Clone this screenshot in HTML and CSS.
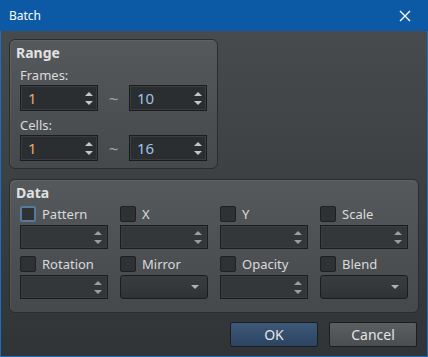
FILE: index.html
```html
<!DOCTYPE html>
<html>
    <head>
        <meta charset="UTF-8">
        <link rel="stylesheet" href="styles.css">
    </head>
    <body>
        <div class="window">
            <div class="titlebar">
                <span class="title">Batch</span>
                <svg class="close" width="12" height="12" viewBox="0 0 12 12"><path d="M1 1L11 11M11 1L1 11" stroke="#ffffff" stroke-width="1.4"/></svg>
            </div>
            <div class="content">
                <!-- 范围 -->
                <div class="group range">
                    <div class="group-title">Range</div>
                    <div class="label">Frames:</div>
                    <div class="range-row">
                        <div class="spin"><span class="val orange">1</span><span class="arrows"><i class="up"></i><i class="down"></i></span></div>
                        <div class="tilde">~</div>
                        <div class="spin"><span class="val blue">10</span><span class="arrows"><i class="up"></i><i class="down"></i></span></div>
                    </div>
                    <div class="label">Cells:</div>
                    <div class="range-row">
                        <div class="spin"><span class="val orange">1</span><span class="arrows"><i class="up"></i><i class="down"></i></span></div>
                        <div class="tilde">~</div>
                        <div class="spin"><span class="val blue">16</span><span class="arrows"><i class="up"></i><i class="down"></i></span></div>
                    </div>
                </div>
                <!-- 数据 -->
                <div class="group data">
                    <div class="group-title">Data</div>
                    <div class="data-grid">
                        <div class="item"><div class="check"><i class="box focus"></i>Pattern</div><div class="field spin"><span class="arrows"><i class="up"></i><i class="down"></i></span></div></div>
                        <div class="item"><div class="check"><i class="box"></i>X</div><div class="field spin"><span class="arrows"><i class="up"></i><i class="down"></i></span></div></div>
                        <div class="item"><div class="check"><i class="box"></i>Y</div><div class="field spin"><span class="arrows"><i class="up"></i><i class="down"></i></span></div></div>
                        <div class="item"><div class="check"><i class="box"></i>Scale</div><div class="field spin"><span class="arrows"><i class="up"></i><i class="down"></i></span></div></div>
                        <div class="item"><div class="check"><i class="box"></i>Rotation</div><div class="field spin"><span class="arrows"><i class="up"></i><i class="down"></i></span></div></div>
                        <div class="item"><div class="check"><i class="box"></i>Mirror</div><div class="field combo"><i class="down"></i></div></div>
                        <div class="item"><div class="check"><i class="box"></i>Opacity</div><div class="field spin"><span class="arrows"><i class="up"></i><i class="down"></i></span></div></div>
                        <div class="item"><div class="check"><i class="box"></i>Blend</div><div class="field combo"><i class="down"></i></div></div>
                    </div>
                </div>
                <div class="buttons">
                    <button class="btn ok">OK</button>
                    <button class="btn cancel">Cancel</button>
                </div>
            </div>
        </div>
    </body>
</html>
```

FILE: styles.css
```css
body{
    margin: 0;
    background-color: #303436;
    font-family: "Noto Sans", "DejaVu Sans", sans-serif;
    font-size: 12px;
    color: #d9dbdc;
}

.window{
    width: 426px;
    height: 356px;
    border: 1px solid #1b6fc0;
    border-top: none;
    background: linear-gradient(to bottom, #4a4d50, #303436);
}

.titlebar{
    height: 31px;
    display: flex;
    align-items: center;
    justify-content: space-between;
    padding: 0 17px 0 9px;
    background-color: #0c5aa5;
    margin: 0 -1px;
}

.title{
    color: #ffffff;
    font-size: 12px;
}

.content{
    padding: 8px 9px 0 8px;
}

/* 分组框 */
.group{
    box-sizing: border-box;
    border: 1px solid #2a2c2e;
    border-radius: 6px;
    background: linear-gradient(to bottom, #56595b, #46494c);
    box-shadow: inset 1px 1px 0 rgba(255,255,255,0.06);
}

.group-title{
    font-weight: bold;
    font-size: 14px;
    line-height: 16px;
    color: #e0e2e3;
    margin-left: -4px;
}

.range{
    width: 209px;
    height: 130px;
    padding: 5px 10px 0 10px;
}

.label{
    line-height: 16px;
    margin-top: 6px;
    font-size: 13px;
}

.range-row{
    display: flex;
    align-items: center;
    margin-top: 2px;
}

.tilde{
    width: 31px;
    text-align: center;
    color: #9aa0a4;
    font-size: 17px;
}

.spin{
    box-sizing: border-box;
    width: 78px;
    height: 26px;
    display: flex;
    align-items: center;
    justify-content: space-between;
    background-color: #2b2e31;
    border: 1px solid #1a1c1e;
    box-shadow: inset 0 0 0 1px #3a3d40;
    padding: 0 4px 0 7px;
}

.val{
    font-size: 15px;
}

.orange{ color: #e7a86a; }
.blue{ color: #9fc2e8; }

.arrows{
    display: flex;
    flex-direction: column;
    gap: 5px;
    margin-left: auto;
}

.up, .down{
    display: block;
    width: 0;
    height: 0;
    border-left: 4px solid transparent;
    border-right: 4px solid transparent;
}

.up{ border-bottom: 4px solid #c4c7ca; }
.down{ border-top: 4px solid #c4c7ca; }

/* 数据区 */
.data{
    width: 410px;
    height: 134px;
    margin-top: 10px;
    padding: 5px 10px 0 10px;
}

.data-grid{
    display: grid;
    grid-template-columns: repeat(4, 100px);
    row-gap: 6px;
    margin-top: 4px;
}

.check{
    display: flex;
    align-items: center;
    height: 17px;
    font-size: 13px;
}

.box{
    box-sizing: border-box;
    width: 16px;
    height: 16px;
    margin-right: 6px;
    background-color: #2f3235;
    border: 1px solid #1e2022;
    border-radius: 2px;
}

.box.focus{
    border: 2px solid #56799f;
}

.field{
    width: 88px;
    height: 24px;
    margin-top: 3px;
}

.field.spin{
    background-color: #34373a;
    padding-right: 5px;
}

.field.spin .up, .field.spin .down{
    border-bottom-color: #9a9ea2;
    border-top-color: #9a9ea2;
}

.combo{
    box-sizing: border-box;
    display: flex;
    align-items: center;
    justify-content: flex-end;
    padding-right: 8px;
    background: linear-gradient(to bottom, #3a3d40, #303336);
    border: 1px solid #1a1c1e;
    border-radius: 3px;
}

.combo .down{
    border-top-color: #b0b4b8;
}

/* 按钮 */
.buttons{
    display: flex;
    justify-content: flex-end;
    gap: 11px;
    margin-top: 9px;
    padding-right: 1px;
}

.btn{
    width: 88px;
    height: 25px;
    font-family: "Noto Sans", "DejaVu Sans", sans-serif;
    font-size: 14px;
    color: #e2e4e6;
    border: 1px solid #1c1e20;
    border-radius: 2px;
}

.ok{ background: linear-gradient(to bottom, #3d5878, #2c4462); }
.cancel{ background: linear-gradient(to bottom, #5c5f62, #4b4e51); }
```
